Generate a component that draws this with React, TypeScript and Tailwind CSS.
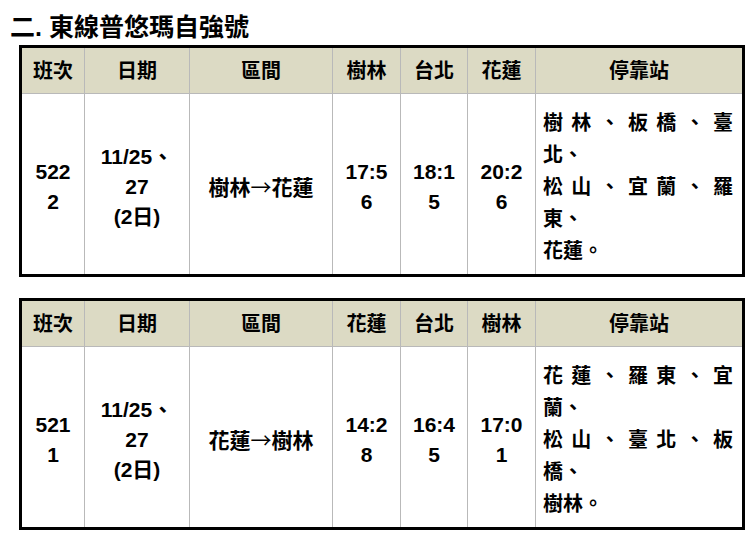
const font = {
  fontFamily: '"Liberation Sans", "Noto Sans CJK TC", sans-serif',
};

type Row = {
  train: string[];
  date: string[];
  route: [string, string];
  times: string[][];
  stops: { text: string; full: boolean }[];
};

type Table = {
  heads: string[];
  row: Row;
};

const tables: Table[] = [
  {
    heads: ['樹林', '台北', '花蓮'],
    row: {
      train: ['522', '2'],
      date: ['11/25、', '27', '(2日)'],
      route: ['樹林', '花蓮'],
      times: [
        ['17:5', '6'],
        ['18:1', '5'],
        ['20:2', '6'],
      ],
      stops: [
        { text: '樹林、板橋、臺', full: true },
        { text: '北、', full: false },
        { text: '松山、宜蘭、羅', full: true },
        { text: '東、', full: false },
        { text: '花蓮。', full: false },
      ],
    },
  },
  {
    heads: ['花蓮', '台北', '樹林'],
    row: {
      train: ['521', '1'],
      date: ['11/25、', '27', '(2日)'],
      route: ['花蓮', '樹林'],
      times: [
        ['14:2', '8'],
        ['16:4', '5'],
        ['17:0', '1'],
      ],
      stops: [
        { text: '花蓮、羅東、宜', full: true },
        { text: '蘭、', full: false },
        { text: '松山、臺北、板', full: true },
        { text: '橋、', full: false },
        { text: '樹林。', full: false },
      ],
    },
  },
];

function Lines({ lines }: { lines: string[] }) {
  return (
    <>
      {lines.map((l, i) => (
        <div key={i}>{l}</div>
      ))}
    </>
  );
}

function Schedule({ table }: { table: Table }) {
  const { heads, row } = table;
  const th = 'border border-[#b9b9b9] font-bold text-[20px] text-center align-middle';
  const td = 'border border-[#b9b9b9] text-[21px] font-bold text-center align-middle leading-[30px] pt-[6px]';
  return (
    <table className="table-fixed border-collapse border-[3px] border-black w-[723px] ml-[19px] text-black">
      <colgroup>
        <col className="w-[64px]" />
        <col className="w-[105px]" />
        <col className="w-[143px]" />
        <col className="w-[68px]" />
        <col className="w-[67px]" />
        <col className="w-[68px]" />
        <col className="w-[208px]" />
      </colgroup>
      <thead>
        <tr className="h-[47px] bg-[#dcdac4]">
          <th className={th}>班次</th>
          <th className={th}>日期</th>
          <th className={th}>區間</th>
          {heads.map((h) => (
            <th key={h} className={th}>
              {h}
            </th>
          ))}
          <th className={th}>停靠站</th>
        </tr>
      </thead>
      <tbody>
        <tr className="h-[182px]">
          <td className={td}>
            <Lines lines={row.train} />
          </td>
          <td className={td}>
            <Lines lines={row.date} />
          </td>
          <td className={td}>
            {row.route[0]}
            <span className="font-['Noto_Sans_CJK_TC'] font-normal">→</span>
            {row.route[1]}
          </td>
          {row.times.map((t, i) => (
            <td key={i} className={td}>
              <Lines lines={t} />
            </td>
          ))}
          <td className="border border-[#b9b9b9] text-[20px] font-bold align-middle leading-[32px] pl-[7px] pr-[9px] pt-[5px]">
            {row.stops.map((s, i) => (
              <div
                key={i}
                className={s.full ? 'text-justify [text-align-last:justify]' : 'text-left'}
              >
                {s.text}
              </div>
            ))}
          </td>
        </tr>
      </tbody>
    </table>
  );
}

export default function App() {
  return (
    <div className="w-[750px] h-[536px] bg-white overflow-hidden" style={font}>
      <h1 className="pl-[10px] pt-[12px] text-[25px] leading-[30px] font-bold text-black">
        二. 東線普悠瑪自強號
      </h1>
      <div className="mt-[3px] flex flex-col gap-[21px]">
        {tables.map((t, i) => (
          <Schedule key={i} table={t} />
        ))}
      </div>
    </div>
  );
}
